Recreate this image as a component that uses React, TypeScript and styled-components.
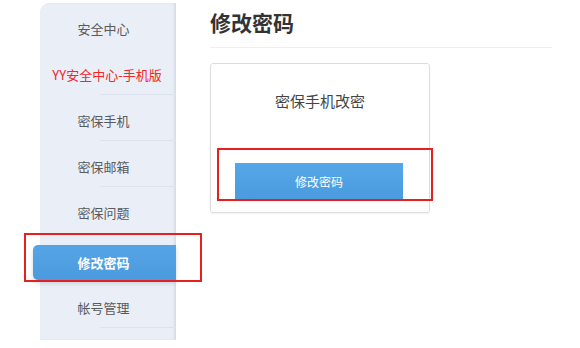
import { createGlobalStyle, styled } from "styled-components"

const GlobalStyle = createGlobalStyle`
  html, body {
    margin: 0;
    padding: 0;
    background: #fff;
    font-family: "Microsoft YaHei", "Noto Sans CJK SC", "Liberation Sans", sans-serif;
  }
`

const menu = [
  { label: "安全中心" },
  { label: "YY安全中心-手机版", red: true, line: true },
  { label: "密保手机", line: true },
  { label: "密保邮箱", line: true },
  { label: "密保问题" },
  { label: "修改密码", active: true },
  { label: "帐号管理", line: true },
]

const App = () => {
  return (
    <>
      <GlobalStyle />
      <Page>
        <Sidebar>
          {menu.map((m) =>
            m.active ? (
              <ActiveItem key={m.label}>
                {m.label}
                <Mark />
              </ActiveItem>
            ) : (
              <Item key={m.label} $red={m.red} $line={m.line}>
                {m.label}
              </Item>
            )
          )}
        </Sidebar>
        <Main>
          <Header>修改密码</Header>
          <Card>
            <CardTitle>密保手机改密</CardTitle>
            <Button>修改密码</Button>
            <ButtonMark />
          </Card>
        </Main>
      </Page>
    </>
  )
}

export default App

const Page = styled.div`
  display: flex;
  align-items: flex-start;
  padding-left: 40px;
  height: 348px;
  overflow: hidden;
`
const Sidebar = styled.div`
  width: 136px;
  margin-top: 3px;
  padding-top: 2px;
  height: 337px;
  box-sizing: border-box;
  background: #e9eef7;
  border-top-left-radius: 9px;
  box-shadow: inset -2px 0 2px rgba(180, 190, 210, 0.35);
  display: flex;
  flex-direction: column;
`
const Item = styled.div<{ $red?: boolean; $line?: boolean }>`
  position: relative;
  height: 46px;
  display: flex;
  align-items: center;
  justify-content: center;
  padding-right: ${(p) => (p.$red ? "2px" : "9px")};
  font-size: 13px;
  color: ${(p) => (p.$red ? "#f0282a" : "#5a5a5a")};
  &::after {
    content: "";
    display: ${(p) => (p.$line ? "block" : "none")};
    position: absolute;
    left: 60px;
    right: 0;
    bottom: 2px;
    height: 1px;
    background: #dde3ee;
  }
  &:last-child {
    margin-top: 4px;
  }
`
const ActiveItem = styled.div`
  position: relative;
  margin: 10px 0 0 -7px;
  height: 35px;
  display: flex;
  align-items: center;
  justify-content: center;
  padding-right: 2px;
  background: linear-gradient(#55a5e6, #4a9ade);
  border-radius: 5px 0 0 5px;
  box-shadow: 0 3px 4px rgba(80, 100, 140, 0.25);
  color: #fff;
  font-size: 13px;
  font-weight: bold;
`
const Mark = styled.span`
  position: absolute;
  left: -9px;
  top: -12px;
  width: 178px;
  height: 49px;
  border: 2px solid #e5201f;
  box-sizing: border-box;
`
const Main = styled.div`
  margin-left: 34px;
  width: 342px;
`
const Header = styled.div`
  margin-top: 8px;
  padding-bottom: 11px;
  border-bottom: 1px solid #eeeeee;
  font-size: 21px;
  line-height: 28px;
  font-weight: bold;
  color: #333;
`
const Card = styled.div`
  position: relative;
  margin-top: 15px;
  width: 220px;
  box-sizing: border-box;
  padding: 26px 0 12px 24px;
  border: 1px solid #dddddd;
  border-radius: 3px;
  box-shadow: 0 1px 2px rgba(0, 0, 0, 0.06);
`
const CardTitle = styled.div`
  text-align: center;
  margin-left: -24px;
  font-size: 15px;
  line-height: 22px;
  color: #444;
`
const Button = styled.div`
  margin-top: 51px;
  width: 168px;
  height: 37px;
  display: flex;
  align-items: center;
  justify-content: center;
  background: linear-gradient(#56a7e7, #4a9bdf);
  color: #fff;
  font-size: 12px;
`
const ButtonMark = styled.span`
  position: absolute;
  left: 6px;
  top: 84px;
  width: 216px;
  height: 53px;
  border: 2px solid #e5201f;
  box-sizing: border-box;
`
